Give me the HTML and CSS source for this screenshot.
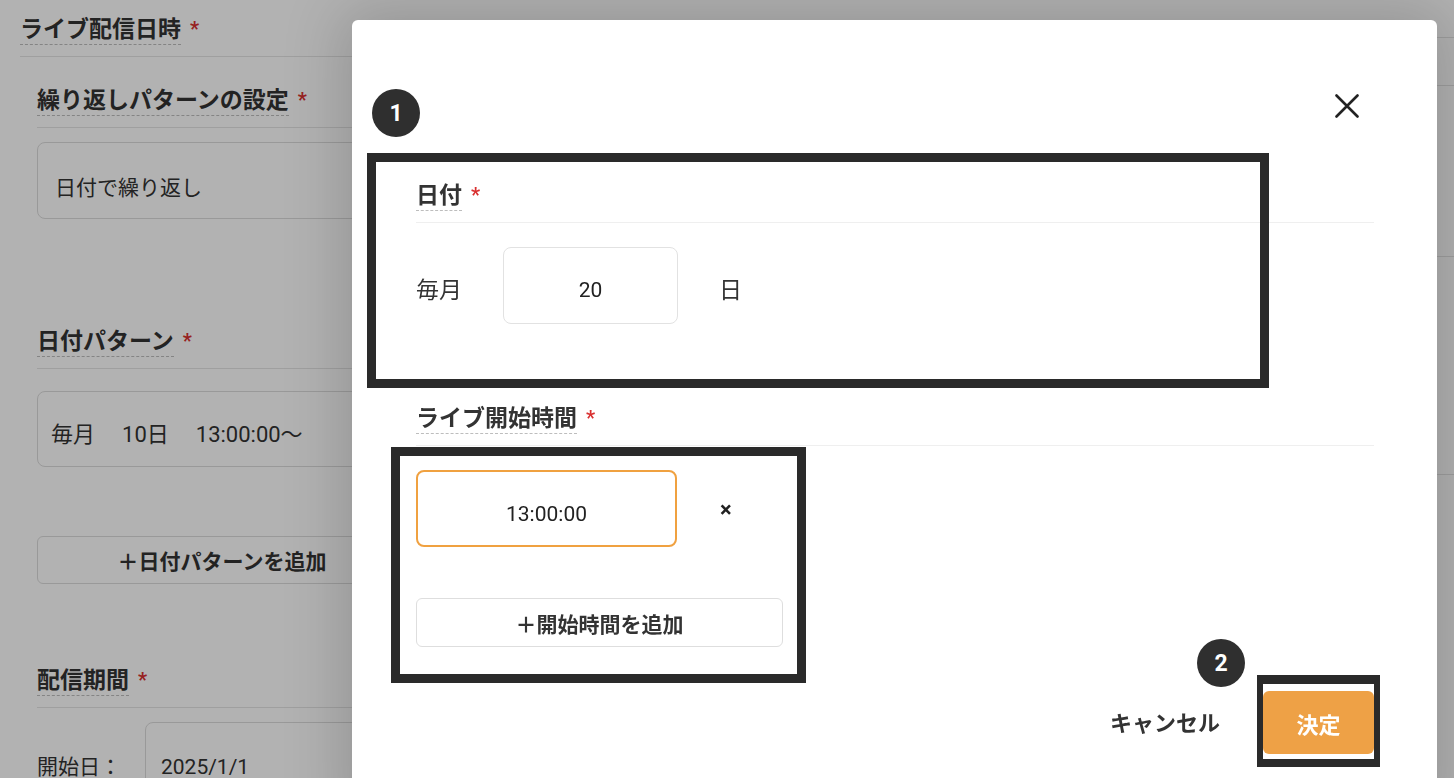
FILE: index.html
```html
<!DOCTYPE html>
<html lang="ja">
<head>
<meta charset="utf-8">
<title>ライブ配信日時</title>
<link rel="stylesheet" href="styles.css">
</head>
<body>
<div class="page">
  <div class="form-main">
    <div class="sec-head sec-top"><span class="label">ライブ配信日時</span><span class="req">*</span></div>
    <div class="sub">
      <div class="sec-head sec-repeat"><span class="label">繰り返しパターンの設定</span><span class="req">*</span></div>
      <div class="bg-box bg-select">日付で繰り返し</div>
      <div class="sec-head sec-pattern"><span class="label">日付パターン</span><span class="req">*</span></div>
      <div class="bg-box bg-pattern">毎月<span class="sp">　</span>10日<span class="sp">　</span>13:00:00～</div>
      <div class="bg-add">＋日付パターンを追加</div>
      <div class="sec-head sec-period"><span class="label">配信期間</span><span class="req">*</span></div>
      <div class="period-row"><span class="period-label">開始日：</span><div class="bg-box bg-date">2025/1/1</div></div>
    </div>
  </div>
  <div class="form-side">
    <div class="side-line h1"></div>
    <div class="side-line h2"></div>
    <div class="side-line h3"></div>
    <div class="side-line h4"></div>
  </div>
</div>

<div class="overlay"></div>

<div class="modal">
  <div class="modal-top">
    <button class="close" aria-label="閉じる">
      <svg width="24" height="24" viewBox="0 0 24 24"><path d="M1.5 1.5 L22.5 22.5 M22.5 1.5 L1.5 22.5" stroke="#222" stroke-width="2.6" fill="none" stroke-linecap="round"/></svg>
    </button>
  </div>

  <section class="field">
    <div class="field-head"><span class="label">日付</span><span class="req">*</span></div>
    <div class="date-row">
      <span class="row-text">毎月</span>
      <div class="input day-input">20</div>
      <span class="row-text">日</span>
    </div>
  </section>

  <section class="field field-time">
    <div class="field-head"><span class="label">ライブ開始時間</span><span class="req">*</span></div>
    <div class="time-row">
      <div class="input time-input">13:00:00</div>
      <span class="remove">×</span>
    </div>
    <button class="add-time">＋開始時間を追加</button>
  </section>

  <div class="footer">
    <button class="cancel">キャンセル</button>
    <button class="ok">決定</button>
  </div>

  <div class="badge badge-1">1</div>
  <div class="badge badge-2">2</div>
  <div class="mark mark-1"></div>
  <div class="mark mark-2"></div>
  <div class="mark mark-3"></div>
</div>
</body>
</html>
```

FILE: styles.css
```css
* { box-sizing: border-box; }

html, body {
  margin: 0;
  padding: 0;
  width: 1454px;
  height: 778px;
  overflow: hidden;
  background: #fff;
  font-family: Roboto, "Noto Sans CJK JP", sans-serif;
  color: #333;
}

button {
  font-family: inherit;
  color: inherit;
  background: none;
  border: none;
  padding: 0;
  cursor: pointer;
}

/* ---------- background page ---------- */
.page {
  display: flex;
  width: 1454px;
  height: 778px;
}

.form-main {
  flex: 0 0 960px;
  padding: 17px 0 0 20px;
}

.form-side {
  flex: 1;
  padding-left: 40px;
}

.side-line { border-bottom: 1px solid #e2e2e2; }
.side-line.h1 { height: 38px; }
.side-line.h2 { height: 48px; }
.side-line.h3 { height: 171px; }
.side-line.h4 { height: 218px; }

.sec-head {
  display: flex;
  align-items: flex-start;
  padding-bottom: 11px;
  border-bottom: 1px solid #e4e4e4;
}

.label {
  display: inline-block;
  font-size: 23px;
  font-weight: 700;
  line-height: 26px;
  padding-bottom: 1px;
  border-bottom: 1px dashed #bdbdbd;
  color: #333;
}

.req {
  margin-left: 9px;
  font-size: 20px;
  font-weight: 700;
  line-height: 24px;
  color: #d93030;
}

.sub { padding-left: 17px; }

.sec-repeat { margin-top: 31px; }
.sec-pattern { margin-top: 110px; }
.sec-period { margin-top: 84px; }

.bg-box {
  border: 1px solid #dcdcdc;
  border-radius: 8px;
  font-size: 21px;
  display: flex;
  align-items: center;
  color: #333;
}

.bg-select {
  margin-top: 14px;
  height: 77px;
  padding-left: 17px;
  padding-top: 10px;
}

.bg-pattern {
  margin-top: 22px;
  height: 76px;
  padding-left: 13px;
  padding-top: 6px;
  font-size: 22px;
  white-space: pre;
}

.bg-pattern .sp { letter-spacing: 5px; }

.bg-add {
  margin-top: 69px;
  width: 370px;
  height: 48px;
  border: 1px solid #dcdcdc;
  border-radius: 6px;
  display: flex;
  align-items: center;
  justify-content: center;
  font-size: 21px;
  font-weight: 700;
}

.period-row {
  margin-top: 14px;
  display: flex;
  align-items: flex-start;
}

.period-label {
  width: 108px;
  font-size: 21px;
  padding-top: 28px;
}

.bg-date {
  width: 300px;
  height: 77px;
  padding-left: 15px;
  padding-top: 12px;
}

/* ---------- overlay ---------- */
.overlay {
  position: fixed;
  inset: 0;
  background: rgba(0, 0, 0, 0.3);
}

/* ---------- modal ---------- */
.modal {
  position: absolute;
  left: 352px;
  top: 20px;
  width: 1085px;
  height: 800px;
  background: #fff;
  border-radius: 6px;
  box-shadow: 0 0 60px 10px rgba(0, 0, 0, 0.17);
  padding: 0 63px 0 64px;
}

.modal-top {
  height: 163px;
  display: flex;
  justify-content: flex-end;
  align-items: flex-start;
  padding-top: 74px;
  padding-right: 15px;
}

.close {
  width: 24px;
  height: 24px;
  display: block;
}
.close svg { display: block; }

.field-head {
  display: flex;
  align-items: flex-start;
  padding-bottom: 11px;
  border-bottom: 1px solid #efefef;
}

.date-row {
  margin-top: 24px;
  display: flex;
  align-items: center;
  gap: 41px;
}

.row-text {
  font-size: 23px;
  color: #333;
  padding-top: 4px;
}

.input {
  display: flex;
  align-items: center;
  justify-content: center;
  font-size: 21px;
  color: #222;
  height: 77px;
  border-radius: 8px;
}

.day-input {
  width: 175px;
  border: 1px solid #e2e2e2;
  padding-top: 9px;
}

.field-time { margin-top: 82px; }

.time-row {
  margin-top: 24px;
  display: flex;
  align-items: center;
  gap: 43px;
}

.time-input {
  width: 261px;
  border: 2px solid #f0a140;
  padding-top: 10px;
}

.remove {
  font-size: 22px;
  font-weight: 700;
  color: #222;
  padding-top: 2px;
}

.add-time {
  margin-top: 51px;
  width: 367px;
  height: 49px;
  border: 1px solid #dedede;
  border-radius: 6px;
  font-size: 21px;
  font-weight: 700;
  color: #333;
  display: flex;
  align-items: center;
  justify-content: center;
}

.footer {
  margin-top: 44px;
  display: flex;
  justify-content: flex-end;
  align-items: center;
  gap: 43px;
}

.cancel {
  font-size: 22px;
  font-weight: 700;
  color: #333;
  margin-bottom: 4px;
}

.ok {
  width: 111px;
  height: 63px;
  border-radius: 6px;
  background: #eea146;
  color: #fff;
  font-size: 22px;
  font-weight: 700;
}

/* ---------- annotations ---------- */
.badge {
  position: absolute;
  width: 48px;
  height: 48px;
  border-radius: 50%;
  background: #2f2f2f;
  color: #fff;
  font-weight: 700;
  font-size: 23px;
  display: flex;
  align-items: center;
  justify-content: center;
}
.badge-1 { left: 20px; top: 69px; }
.badge-2 { left: 845px; top: 619px; }

.mark {
  position: absolute;
  border: 9px solid #2a2a2a;
}
.mark-1 { left: 15px; top: 133px; width: 902px; height: 235px; }
.mark-2 { left: 39px; top: 427px; width: 415px; height: 236px; }
.mark-3 { left: 905px; top: 655px; width: 123px; height: 92px; border-width: 9px 6px 8px; }
```
